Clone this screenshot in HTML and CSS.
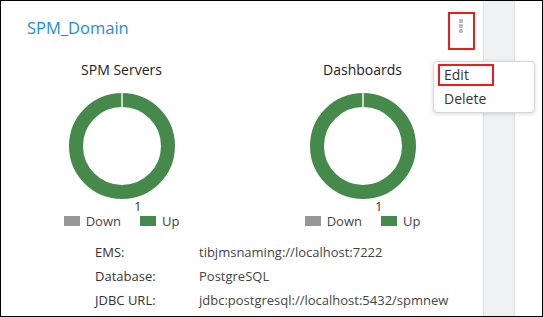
FILE: index.html
```html
<!DOCTYPE html>
<html lang="en">
<head>
<meta charset="UTF-8">
<title>SPM_Domain</title>
<link rel="stylesheet" href="styles.css">
</head>
<body>
<div class="frame">
  <div class="card">
    <div class="head">
      <h2 class="title">SPM_Domain</h2>
      <div class="kebab"><span></span><span></span><span></span></div>
    </div>
    <div class="charts">
      <div class="chart">
        <h3>SPM Servers</h3>
        <svg class="donut" width="106" height="106" viewBox="0 0 106 106">
          <circle cx="53" cy="53" r="46" fill="none" stroke="#468a4b" stroke-width="14"/>
          <rect x="52.3" y="0" width="1.4" height="15" fill="#fff"/>
        </svg>
        <div class="count">1</div>
        <div class="legend">
          <span class="sw down"></span><span class="lbl">Down</span>
          <span class="sw up"></span><span class="lbl">Up</span>
        </div>
      </div>
      <div class="chart">
        <h3>Dashboards</h3>
        <svg class="donut" width="106" height="106" viewBox="0 0 106 106">
          <circle cx="53" cy="53" r="46" fill="none" stroke="#468a4b" stroke-width="14"/>
          <rect x="52.3" y="0" width="1.4" height="15" fill="#fff"/>
        </svg>
        <div class="count">1</div>
        <div class="legend">
          <span class="sw down"></span><span class="lbl">Down</span>
          <span class="sw up"></span><span class="lbl">Up</span>
        </div>
      </div>
    </div>
    <div class="info">
      <div class="row"><span class="key">EMS:</span><span class="val">tibjmsnaming://localhost:7222</span></div>
      <div class="row"><span class="key">Database:</span><span class="val">PostgreSQL</span></div>
      <div class="row"><span class="key">JDBC URL:</span><span class="val">jdbc:postgresql://localhost:5432/spmnew</span></div>
    </div>
  </div>
  <div class="strip"></div>
  <div class="rest"></div>

  <div class="mark kebab-mark"></div>
  <div class="menu">
    <div class="item">Edit</div>
    <div class="item">Delete</div>
  </div>
  <div class="mark edit-mark"></div>
</div>
</body>
</html>
```

FILE: styles.css
```css
body { margin: 0; font-family: 'Open Sans', 'Liberation Sans', sans-serif; color: #333; }
.frame { width: 543px; height: 317px; border: 1px solid #000; box-sizing: border-box; display: flex;
         position: relative; overflow: hidden; background: #fff; }
.card { width: 482px; background: #fff; }
.strip { width: 30px; background: #f0f1f3; border-left: 1px solid #dedfe1; border-right: 1px solid #dedfe1; }
.rest { flex: 1; background: #fff; }

.head { display: flex; justify-content: space-between; padding: 16px 0 0 26px; }
.title { margin: 0; font-size: 16.5px; line-height: 22px; font-weight: normal; color: #1f8dd6; }
.kebab { display: flex; flex-direction: column; gap: 1px; margin: 2px 20px 0 0; }
.kebab span { width: 4px; height: 4px; background: #b4bcc7; border-radius: 1px; }

.charts { display: grid; grid-template-columns: 1fr 1fr; margin-top: 21px; }
.chart { display: flex; flex-direction: column; align-items: center; }
.chart h3 { margin: 0 0 13px; font-size: 14px; line-height: 20px; font-weight: normal; color: #222; }
.donut { display: block; }
.count { width: 106px; text-align: right; padding-right: 33px; box-sizing: border-box;
         font-size: 13px; line-height: 14px; color: #333; }
.legend { display: flex; align-items: center; height: 16px; font-size: 13px; color: #444; }
.sw { width: 16px; height: 10px; margin-right: 6px; }
.sw.down { background: #979797; }
.sw.up { background: #468a4b; margin-left: 19px; }

.info { padding: 11px 0 0 94px; font-size: 13px; }
.row { display: flex; line-height: 24px; }
.key { width: 104px; color: #333; }
.val { color: #444; }

.mark { position: absolute; border: 2px solid #ee1c1c; box-sizing: border-box; }
.kebab-mark { left: 447px; top: 11px; width: 27px; height: 38px; }
.menu { position: absolute; left: 432px; top: 60px; width: 100px; padding: 1px 0; background: #fff;
        border: 1px solid #d8d8d8; border-radius: 4px; box-shadow: 0 1px 4px rgba(0,0,0,0.15); }
.item { font-size: 14px; line-height: 24px; padding-left: 10px; color: #333; }
.edit-mark { left: 437px; top: 63px; width: 56px; height: 22px; }
```
